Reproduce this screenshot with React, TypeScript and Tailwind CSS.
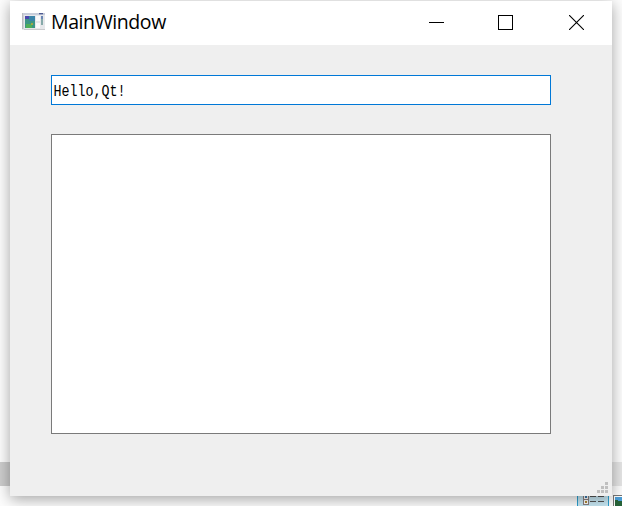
function AppIcon() {
  return (
    <svg width="24" height="20" viewBox="0 0 24 20">
      <rect x="0" y="1" width="23" height="17" fill="#e6e7ea" />
      <rect x="0" y="1" width="1.5" height="16" fill="#b9bbc0" />
      <rect x="1" y="1" width="22" height="2" fill="#c9cedb" />
      <rect x="17" y="1" width="4" height="1.3" fill="#4d5a91" />
      <rect x="3" y="4" width="10" height="12" fill="#3c9584" />
      <rect x="3" y="4" width="4" height="3" fill="#4a47ad" />
      <rect x="7" y="4" width="6" height="5" fill="#3a84a8" />
      <rect x="4" y="12" width="6" height="4" fill="#4eae58" />
      <rect x="9" y="11" width="2" height="2" fill="#9fa648" />
      <rect x="14" y="4" width="4" height="5" fill="#f9f9fa" />
      <rect x="14" y="11" width="4" height="5" fill="#f9f9fa" />
      <rect x="19" y="4" width="2" height="9" fill="#86a9a9" />
      <rect x="19" y="4" width="2" height="3" fill="#6a86b5" />
      <rect x="2" y="17" width="21" height="1" fill="#c9cacd" />
    </svg>
  );
}

function TitleBar() {
  return (
    <header className="flex h-11 items-center bg-white">
      <div className="-mt-0.5 ml-3 h-5 w-6">
        <AppIcon />
      </div>
      <h1 className="-mt-0.5 ml-[5px] flex-1 text-[19.5px] leading-none tracking-[-0.4px] whitespace-nowrap text-black">MainWindow</h1>
      <div className="flex">
        <button aria-label="Minimize" className="flex h-11 w-[69px] items-center justify-center pb-px">
          <svg width="15" height="15" shapeRendering="crispEdges"><path d="M0 7.5H15" stroke="#000" /></svg>
        </button>
        <button aria-label="Maximize" className="flex h-11 w-[69px] items-center justify-center pb-px">
          <svg width="15" height="15" shapeRendering="crispEdges"><rect x=".5" y=".5" width="14" height="14" fill="none" stroke="#000" /></svg>
        </button>
        <button aria-label="Close" className="flex h-11 w-[72px] items-center justify-center pb-px">
          <svg width="15" height="15"><path d="M0 0L15 15M15 0L0 15" stroke="#000" strokeWidth="1.1" /></svg>
        </button>
      </div>
    </header>
  );
}

function Desktop() {
  return (
    <div className="absolute inset-0 bg-[#fdfdfd]">
      <div className="absolute top-[462px] left-0 h-6 w-full bg-[#cdcdcd]" />
      <div className="absolute top-[462px] right-0 h-6 w-[12px] bg-[#e6e6e6]" />
      <svg className="absolute top-[495px] left-[577px]" width="45" height="11" shapeRendering="crispEdges">
        <rect x=".5" y="-1" width="31" height="14" fill="#c8e8f4" stroke="#2ba0d0" />
        <rect x="6" y="0" width="5" height="4" fill="#fff" stroke="#8a8080" />
        <rect x="6" y="4.5" width="5" height="5" fill="#fff" stroke="#8a8080" />
        <rect x="8" y="1" width="2" height="2" fill="#397bb0" />
        <rect x="8" y="6" width="2" height="2" fill="#b08a35" />
        <path d="M13 1.5H19M21 1.5H27M13 6.5H19M21 6.5H27" stroke="#555" />
        <rect x="36.5" y=".5" width="12" height="14" fill="#fff" stroke="#777" />
        <rect x="38" y="2" width="8" height="5" fill="#4b9ed8" />
        <path d="M38 5h3v1h4v5h-7z" fill="#276338" />
      </svg>
    </div>
  );
}

export default function App() {
  return (
    <main className="relative h-[506px] w-[622px] overflow-hidden pt-px pl-[10px] font-['Open_Sans',sans-serif]">
      <Desktop />
      <section className="relative flex h-[495px] w-[602px] flex-col bg-[#efefef] shadow-[0_3px_14px_rgba(0,0,0,0.36)]">
        <TitleBar />
        <div className="flex flex-col gap-[29px] px-[41px] pt-[30px]">
          <div className="flex h-[30px] w-[500px] items-center border border-[#0078d7] bg-white pt-[3px] pl-[1.5px]">
            <span className="origin-center scale-y-[1.18] font-['Liberation_Mono',monospace] text-[13.33px] leading-none text-black">Hello,Qt!</span>
          </div>
          <div className="h-[300px] w-[500px] border border-[#7a7a7a] bg-white" />
        </div>
        <svg className="mt-auto mr-1 mb-[3px] self-end" width="11" height="11" shapeRendering="crispEdges" fill="#bfbfbf">
          <path d="M8 0h3v3H8zM4 4h3v3H4zM8 4h3v3H8zM0 8h3v3H0zM4 8h3v3H4zM8 8h3v3H8z" />
        </svg>
      </section>
    </main>
  );
}
